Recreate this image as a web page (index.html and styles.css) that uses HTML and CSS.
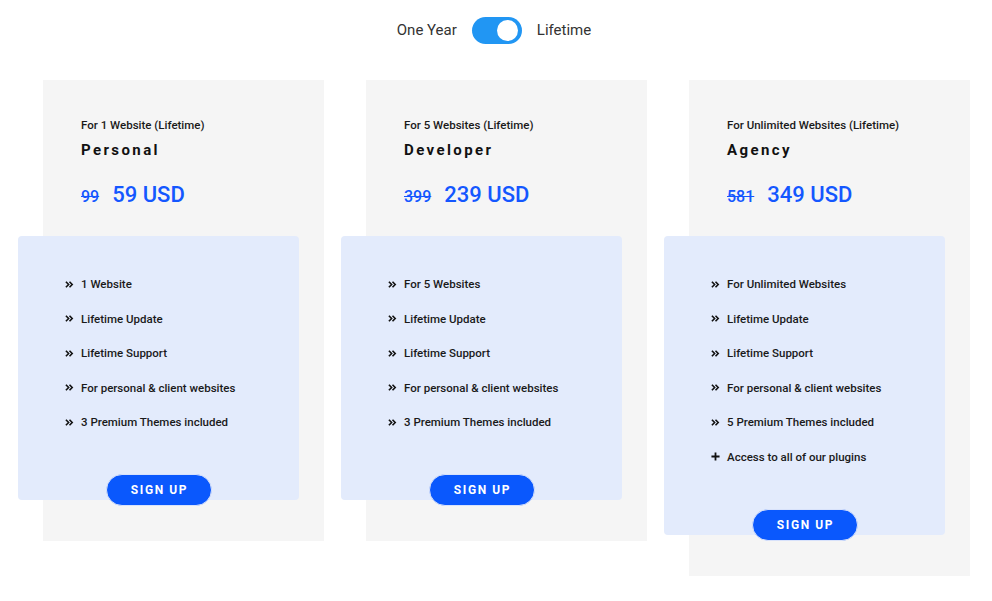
FILE: index.html
```html
<!DOCTYPE html>
<html>
<head>
<meta charset="utf-8">
<link rel="stylesheet" href="styles.css">
</head>
<body>
<div class="toggle-row">
  <span class="toggle-label">One Year</span>
  <span class="switch"><span class="knob"></span></span>
  <span class="toggle-label">Lifetime</span>
</div>
<div class="cards">
  <div class="card">
    <div class="subtitle">For 1 Website (Lifetime)</div>
    <div class="plan">Personal</div>
    <div class="price"><span class="old">99</span><span class="new">59 USD</span></div>
    <div class="box">
      <ul class="features">
        <li><svg class="ic" viewBox="0 0 10 10"><path d="M1 2l3 3-3 3M5 2l3 3-3 3" fill="none" stroke="#111" stroke-width="1.8"/></svg>1 Website</li>
        <li><svg class="ic" viewBox="0 0 10 10"><path d="M1 2l3 3-3 3M5 2l3 3-3 3" fill="none" stroke="#111" stroke-width="1.8"/></svg>Lifetime Update</li>
        <li><svg class="ic" viewBox="0 0 10 10"><path d="M1 2l3 3-3 3M5 2l3 3-3 3" fill="none" stroke="#111" stroke-width="1.8"/></svg>Lifetime Support</li>
        <li><svg class="ic" viewBox="0 0 10 10"><path d="M1 2l3 3-3 3M5 2l3 3-3 3" fill="none" stroke="#111" stroke-width="1.8"/></svg>For personal &amp; client websites</li>
        <li><svg class="ic" viewBox="0 0 10 10"><path d="M1 2l3 3-3 3M5 2l3 3-3 3" fill="none" stroke="#111" stroke-width="1.8"/></svg>3 Premium Themes included</li>
      </ul>
      <a class="btn">SIGN UP</a>
    </div>
  </div>
  <div class="card">
    <div class="subtitle">For 5 Websites (Lifetime)</div>
    <div class="plan">Developer</div>
    <div class="price"><span class="old">399</span><span class="new">239 USD</span></div>
    <div class="box">
      <ul class="features">
        <li><svg class="ic" viewBox="0 0 10 10"><path d="M1 2l3 3-3 3M5 2l3 3-3 3" fill="none" stroke="#111" stroke-width="1.8"/></svg>For 5 Websites</li>
        <li><svg class="ic" viewBox="0 0 10 10"><path d="M1 2l3 3-3 3M5 2l3 3-3 3" fill="none" stroke="#111" stroke-width="1.8"/></svg>Lifetime Update</li>
        <li><svg class="ic" viewBox="0 0 10 10"><path d="M1 2l3 3-3 3M5 2l3 3-3 3" fill="none" stroke="#111" stroke-width="1.8"/></svg>Lifetime Support</li>
        <li><svg class="ic" viewBox="0 0 10 10"><path d="M1 2l3 3-3 3M5 2l3 3-3 3" fill="none" stroke="#111" stroke-width="1.8"/></svg>For personal &amp; client websites</li>
        <li><svg class="ic" viewBox="0 0 10 10"><path d="M1 2l3 3-3 3M5 2l3 3-3 3" fill="none" stroke="#111" stroke-width="1.8"/></svg>3 Premium Themes included</li>
      </ul>
      <a class="btn">SIGN UP</a>
    </div>
  </div>
  <div class="card">
    <div class="subtitle">For Unlimited Websites (Lifetime)</div>
    <div class="plan">Agency</div>
    <div class="price"><span class="old">581</span><span class="new">349 USD</span></div>
    <div class="box">
      <ul class="features">
        <li><svg class="ic" viewBox="0 0 10 10"><path d="M1 2l3 3-3 3M5 2l3 3-3 3" fill="none" stroke="#111" stroke-width="1.8"/></svg>For Unlimited Websites</li>
        <li><svg class="ic" viewBox="0 0 10 10"><path d="M1 2l3 3-3 3M5 2l3 3-3 3" fill="none" stroke="#111" stroke-width="1.8"/></svg>Lifetime Update</li>
        <li><svg class="ic" viewBox="0 0 10 10"><path d="M1 2l3 3-3 3M5 2l3 3-3 3" fill="none" stroke="#111" stroke-width="1.8"/></svg>Lifetime Support</li>
        <li><svg class="ic" viewBox="0 0 10 10"><path d="M1 2l3 3-3 3M5 2l3 3-3 3" fill="none" stroke="#111" stroke-width="1.8"/></svg>For personal &amp; client websites</li>
        <li><svg class="ic" viewBox="0 0 10 10"><path d="M1 2l3 3-3 3M5 2l3 3-3 3" fill="none" stroke="#111" stroke-width="1.8"/></svg>5 Premium Themes included</li>
        <li><svg class="ic" viewBox="0 0 10 10"><path d="M5 0.5v9M0.5 5h9" fill="none" stroke="#111" stroke-width="2"/></svg>Access to all of our plugins</li>
      </ul>
      <a class="btn">SIGN UP</a>
    </div>
  </div>
</div>
</body>
</html>
```

FILE: styles.css
```css
* { box-sizing: border-box; }
body {
  margin: 0;
  background: #fff;
  font-family: Roboto, "Liberation Sans", sans-serif;
  color: #222;
}
.toggle-row {
  display: flex;
  justify-content: center;
  align-items: center;
  gap: 15px;
  padding-top: 17px;
  padding-right: 4px;
}
.toggle-label {
  font-size: 15px;
  color: #333;
  line-height: 27px;
}
.switch {
  width: 50px;
  height: 27px;
  border-radius: 14px;
  background: #2196f3;
  display: flex;
  align-items: center;
  justify-content: flex-end;
  padding-right: 4px;
}
.knob {
  width: 21px;
  height: 21px;
  border-radius: 50%;
  background: #fff;
}
.cards {
  display: flex;
  align-items: flex-start;
  gap: 42px;
  padding-left: 43px;
  margin-top: 36px;
}
.card {
  width: 281px;
  background: #f5f5f5;
  padding: 37px 0 41px 38px;
}
.subtitle {
  font-size: 11.5px;
  font-weight: 500;
  line-height: 16px;
  color: #1a1a1a;
}
.plan {
  margin-top: 7px;
  font-size: 15px;
  font-weight: 700;
  letter-spacing: 2.4px;
  line-height: 20px;
  color: #111;
}
.price {
  margin-top: 21px;
  line-height: 28px;
  color: #1457ff;
  display: flex;
  align-items: baseline;
}
.old {
  font-size: 16px;
  font-weight: 500;
  text-decoration: line-through;
  margin-right: 13px;
}
.new {
  font-size: 22px;
  font-weight: 500;
}
.box {
  margin-top: 25px;
  margin-left: -63px;
  width: 281px;
  background: #e3ebfc;
  border-radius: 4px;
  display: flex;
  flex-direction: column;
  padding-top: 40px;
}
.features {
  list-style: none;
  margin: 0;
  padding: 0 0 0 47px;
}
.features li {
  display: flex;
  align-items: center;
  font-size: 11.5px;
  font-weight: 500;
  line-height: 16px;
  color: #1a1a1a;
  margin-bottom: 18.5px;
}
.features li:last-child { margin-bottom: 0; }
.ic {
  width: 9px;
  height: 9px;
  margin-right: 7px;
  flex: none;
}
.btn {
  align-self: center;
  margin-top: 44px;
  margin-bottom: -6px;
  width: 106px;
  height: 32px;
  border-radius: 16px;
  background: #0a58fd;
  border: 1px solid #d8e2fb;
  color: #fff;
  font-size: 12px;
  font-weight: 700;
  letter-spacing: 1.6px;
  display: flex;
  align-items: center;
  justify-content: center;
  padding-left: 2px;
}
```
